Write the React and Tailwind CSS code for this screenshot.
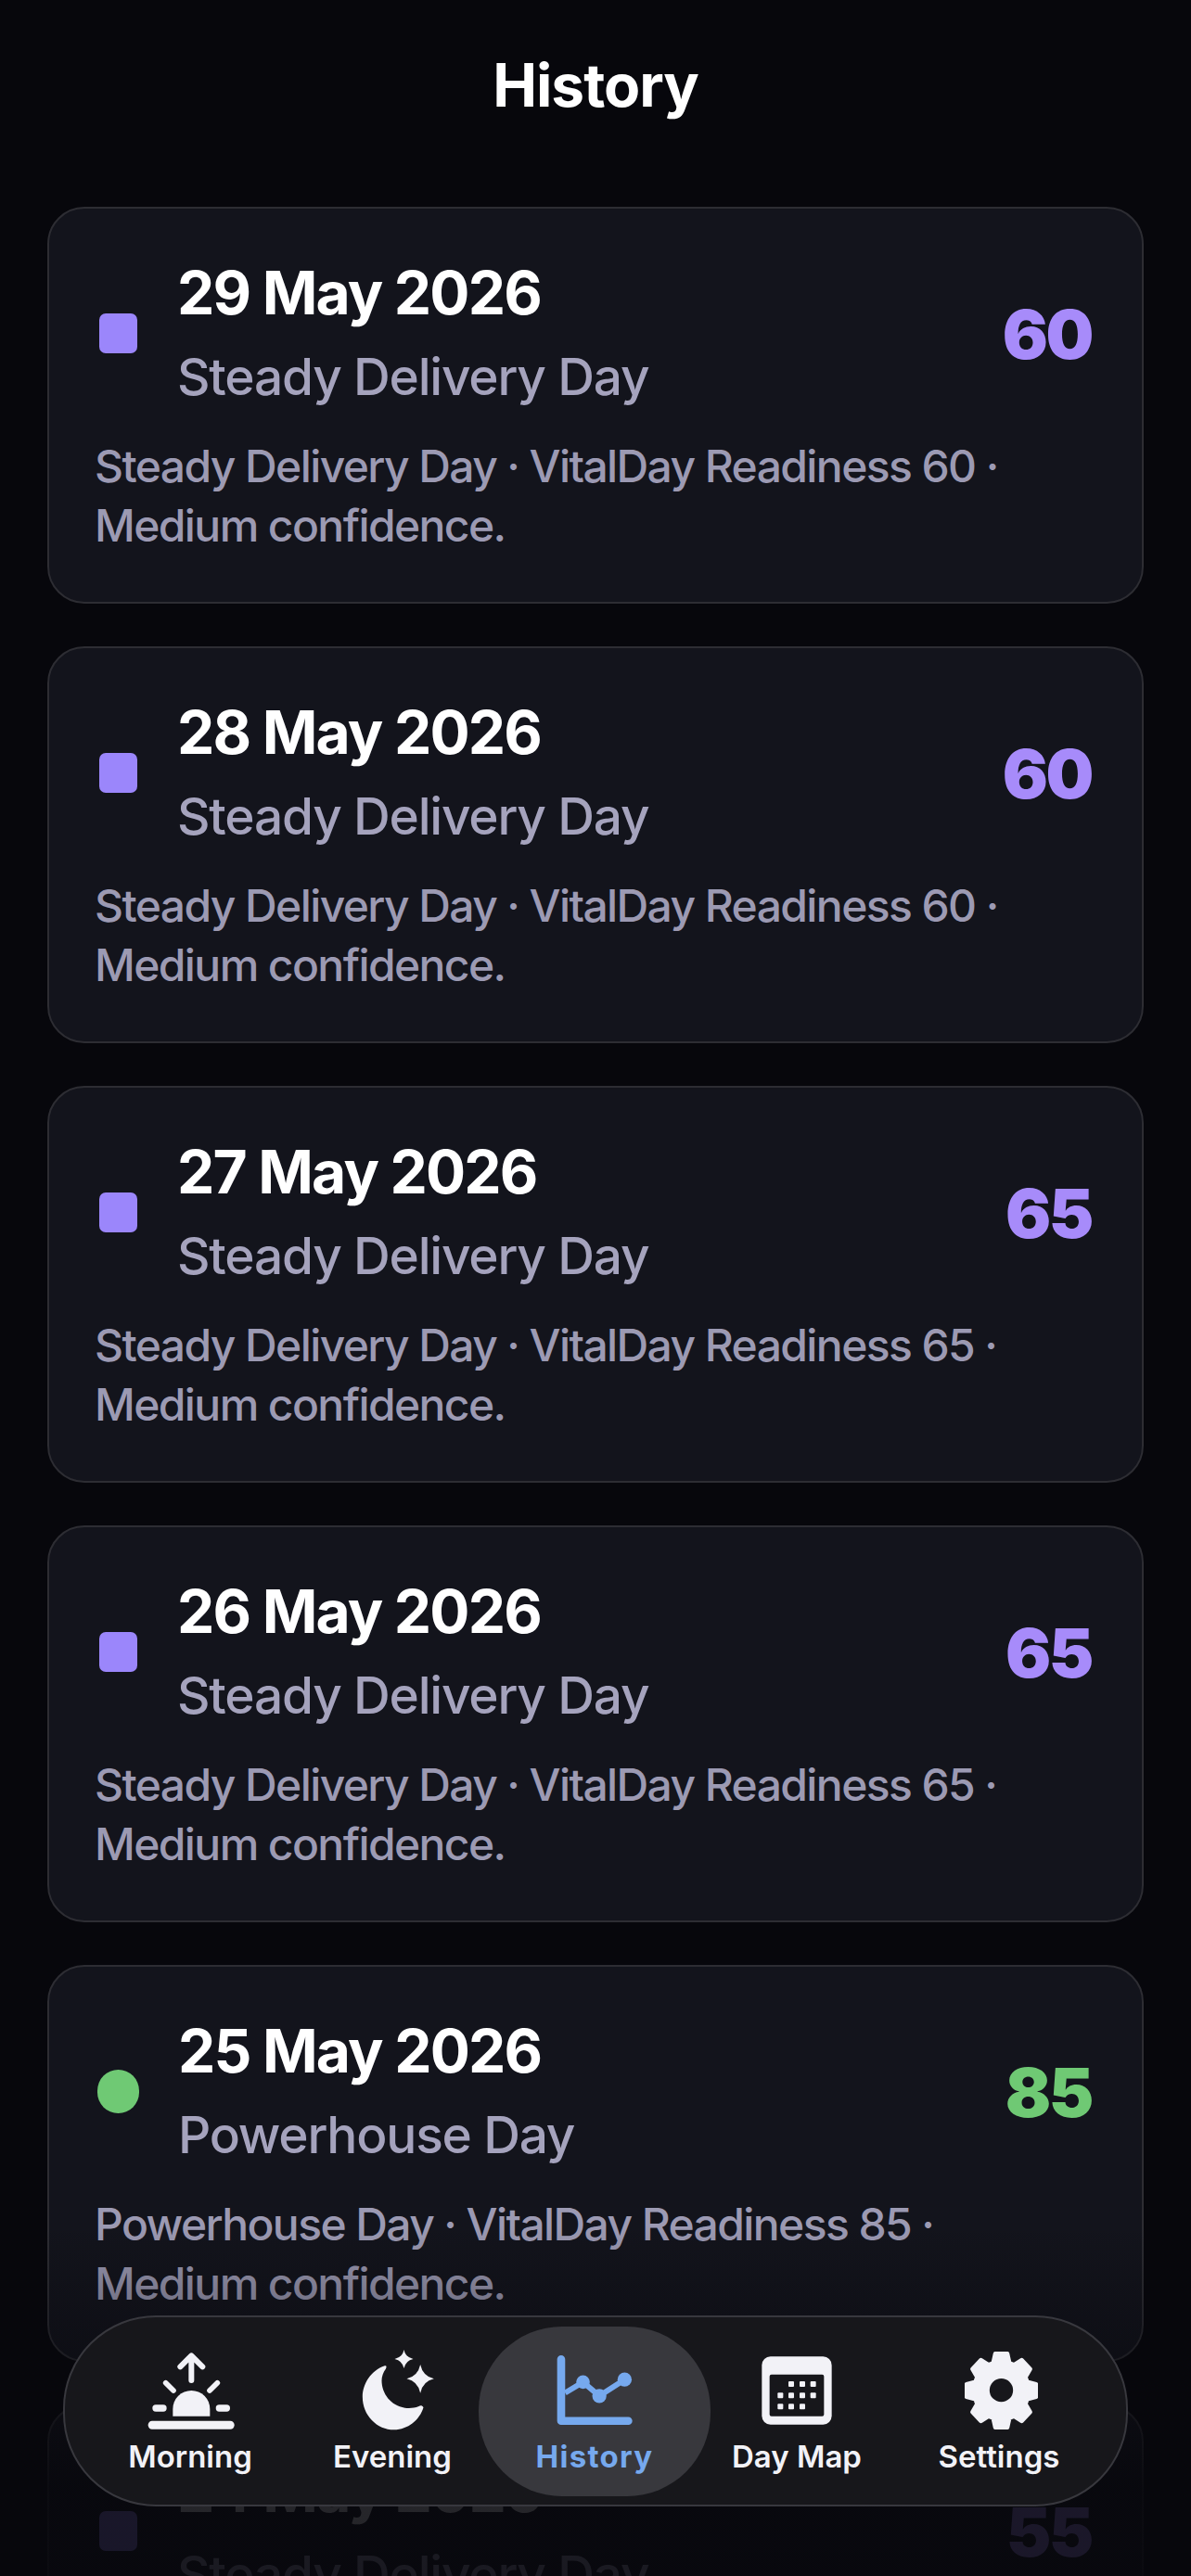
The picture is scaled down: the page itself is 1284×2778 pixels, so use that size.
import React from 'react';

const days = [
  { date: '29 May 2026', title: 'Steady Delivery Day', score: 60, tone: 'purple' },
  { date: '28 May 2026', title: 'Steady Delivery Day', score: 60, tone: 'purple' },
  { date: '27 May 2026', title: 'Steady Delivery Day', score: 65, tone: 'purple' },
  { date: '26 May 2026', title: 'Steady Delivery Day', score: 65, tone: 'purple' },
  { date: '25 May 2026', title: 'Powerhouse Day', score: 85, tone: 'green' },
  { date: '24 May 2026', title: 'Steady Delivery Day', score: 55, tone: 'purple' },
];

const star = (cx, cy, rx, ry) => {
  const k = 0.18;
  return `M${cx} ${cy - ry}Q${cx + rx * k} ${cy - ry * k} ${cx + rx} ${cy}Q${cx + rx * k} ${cy + ry * k} ${cx} ${cy + ry}Q${cx - rx * k} ${cy + ry * k} ${cx - rx} ${cy}Q${cx - rx * k} ${cy - ry * k} ${cx} ${cy - ry}Z`;
};

const gearPoints = () => {
  const pts = [];
  for (let i = 0; i < 8; i++) {
    const a = (i * Math.PI) / 4;
    [[-0.3, 88], [-0.17, 114], [0.17, 114], [0.3, 88]].forEach(([d, r]) => {
      pts.push(`${(118 + Math.sin(a + d) * r).toFixed(1)},${(126 - Math.cos(a + d) * r * 1.06).toFixed(1)}`);
    });
  }
  return pts.join(' ');
};

const SunriseIcon = () => (
  <svg viewBox="80 20 300 270" className="w-[100px] h-[90px] ml-[4px]" fill="#f2f2f7" stroke="none">
    <rect x="88" y="253" width="279" height="27" rx="13" />
    <path d="M168 238V215a60 60 0 0 1 120 0V238Z" />
    <rect x="102" y="201" width="46" height="22" rx="11" />
    <rect x="307" y="201" width="46" height="22" rx="11" />
    <g fill="none" stroke="#f2f2f7" strokeLinecap="round" strokeLinejoin="round">
      <path d="M145 130L170 155M312 130L287 155" strokeWidth="17" />
      <path d="M228 122V45M192 78L228 42L264 78" strokeWidth="18" />
    </g>
  </svg>
);

const MoonIcon = () => (
  <svg viewBox="775 15 245 270" className="w-[82px] h-[90px] ml-[12px]" fill="#f2f2f7">
    <path d="M855 70C810 85 783 130 783 170C783 230 830 277 885 277C930 277 968 245 980 205C976 198 970 198 965 201C950 207 935 208 920 206C875 200 845 160 845 118C845 105 850 90 858 80C862 72 860 68 855 70Z" />
    <path d={star(917, 48, 30, 30)} />
    <path d={star(970, 112, 44, 46)} />
  </svg>
);

const ChartIcon = () => (
  <svg viewBox="260 110 265 245" className="w-[88px] h-[82px]" fill="none" stroke="#76a9ee">
    <path d="M284 131V331H502" strokeWidth="26" strokeLinecap="round" strokeLinejoin="round" />
    <path d="M297 240L355 205L408 250L490 197" strokeWidth="18" />
    <g fill="#76a9ee" stroke="none">
      <circle cx="355" cy="205" r="22" />
      <circle cx="408" cy="250" r="23" />
      <circle cx="490" cy="197" r="23" />
    </g>
  </svg>
);

const dots = [
  [162, 136], [198, 136], [233, 136],
  [127, 173], [162, 173], [198, 173], [233, 173],
  [127, 209], [162, 209], [198, 209],
];

const CalendarIcon = () => (
  <svg viewBox="60 40 240 234" className="w-[80px] h-[78px]">
    <rect x="67" y="47" width="226" height="220" rx="28" fill="#f2f2f7" />
    <rect x="92" y="105" width="176" height="135" rx="6" fill="#17171b" />
    {dots.map(([x, y]) => (
      <rect key={`${x}-${y}`} x={x - 9} y={y - 9} width="18" height="18" rx="3" fill="#f2f2f7" />
    ))}
  </svg>
);

const GearIcon = () => (
  <svg viewBox="0 0 236 252" className="w-[79px] h-[84px] ml-[4px]">
    <polygon points={gearPoints()} fill="#f2f2f7" stroke="#f2f2f7" strokeWidth="14" strokeLinejoin="round" />
    <circle cx="118" cy="125" r="38" fill="#17171b" />
  </svg>
);

const navItems = [
  { label: 'Morning', Icon: SunriseIcon },
  { label: 'Evening', Icon: MoonIcon },
  { label: 'History', Icon: ChartIcon, active: true },
  { label: 'Day Map', Icon: CalendarIcon },
  { label: 'Settings', Icon: GearIcon },
];

const HistoryCard = ({ day }) => {
  const isGreen = day.tone === 'green';
  return (
    <div className="h-[428px] rounded-[40px] border-2 border-[#2d2d33] bg-[#13141c] pl-[49px] pr-[54px] pt-[55px]">
      <div className="flex items-center">
        <div
          className={
            isGreen
              ? 'w-[45px] h-[47px] ml-[3px] mb-[4px] rounded-full bg-[#6fc974]'
              : 'w-[41px] h-[43px] ml-[5px] mb-[4px] rounded-[7px] bg-[#9b86fb]'
          }
        />
        <div className={isGreen ? 'ml-[42px] flex-1' : 'ml-[43px] flex-1'}>
          <div className="text-[64px] leading-[72px] font-bold tracking-[-1.8px] text-white">{day.date}</div>
          <div className="mt-[18px] text-[55px] leading-[72px] font-medium tracking-[-1.2px] text-[#a5a3bd]">{day.title}</div>
        </div>
        <div className={isGreen ? 'text-[73px] font-black tracking-[-2.5px] text-[#6fc974]' : 'text-[73px] font-black tracking-[-2.5px] text-[#a78bfa]'}>
          {day.score}
        </div>
      </div>
      <p className="mt-[29px] text-[48px] leading-[64px] font-medium tracking-[-1.6px] text-[#9c9ab3]">
        {day.title} · VitalDay Readiness {day.score} · Medium confidence.
      </p>
    </div>
  );
};

const BottomNav = () => (
  <nav className="absolute left-[68px] top-[2497px] w-[1148px] h-[206px] rounded-[100px] border-2 border-[#38383e] bg-[#17171b] flex items-center pl-[26px]">
    {navItems.map(({ label, Icon, active }) => (
      <div
        key={label}
        className={
          active
            ? 'w-[250px] -mx-[16px] h-[183px] rounded-[90px] bg-[#38383d] flex flex-col items-center justify-center'
            : 'w-[218px] h-[183px] flex flex-col items-center justify-center'
        }
      >
        <div className="h-[92px] flex items-center justify-center">
          <Icon />
        </div>
        <div className={active ? 'mt-[5px] text-[33px] leading-[40px] font-bold tracking-[1.3px] text-[#76a9ee]' : 'mt-[5px] text-[33px] leading-[40px] font-semibold text-[#f2f2f7]'}>
          {label}
        </div>
      </div>
    ))}
  </nav>
);

const App = () => {
  return (
    <div className="relative w-full h-[2778px] overflow-hidden bg-[#07070c] [font-family:Inter,sans-serif]">
      <h1 className="pt-[52px] h-[223px] text-center text-[64px] leading-[80px] font-bold tracking-[-1px] text-white">History</h1>
      <div className="flex flex-col gap-[46px] px-[51px]">
        {days.map((day) => (
          <HistoryCard key={day.date} day={day} />
        ))}
      </div>

      {/* fade behind the floating nav */}
      <div className="absolute left-0 right-0 top-[2400px] bottom-0 bg-gradient-to-b from-[#07070c00] to-[#07070ce0] to-[75%]" />
      <BottomNav />
    </div>
  );
};

export default App;
